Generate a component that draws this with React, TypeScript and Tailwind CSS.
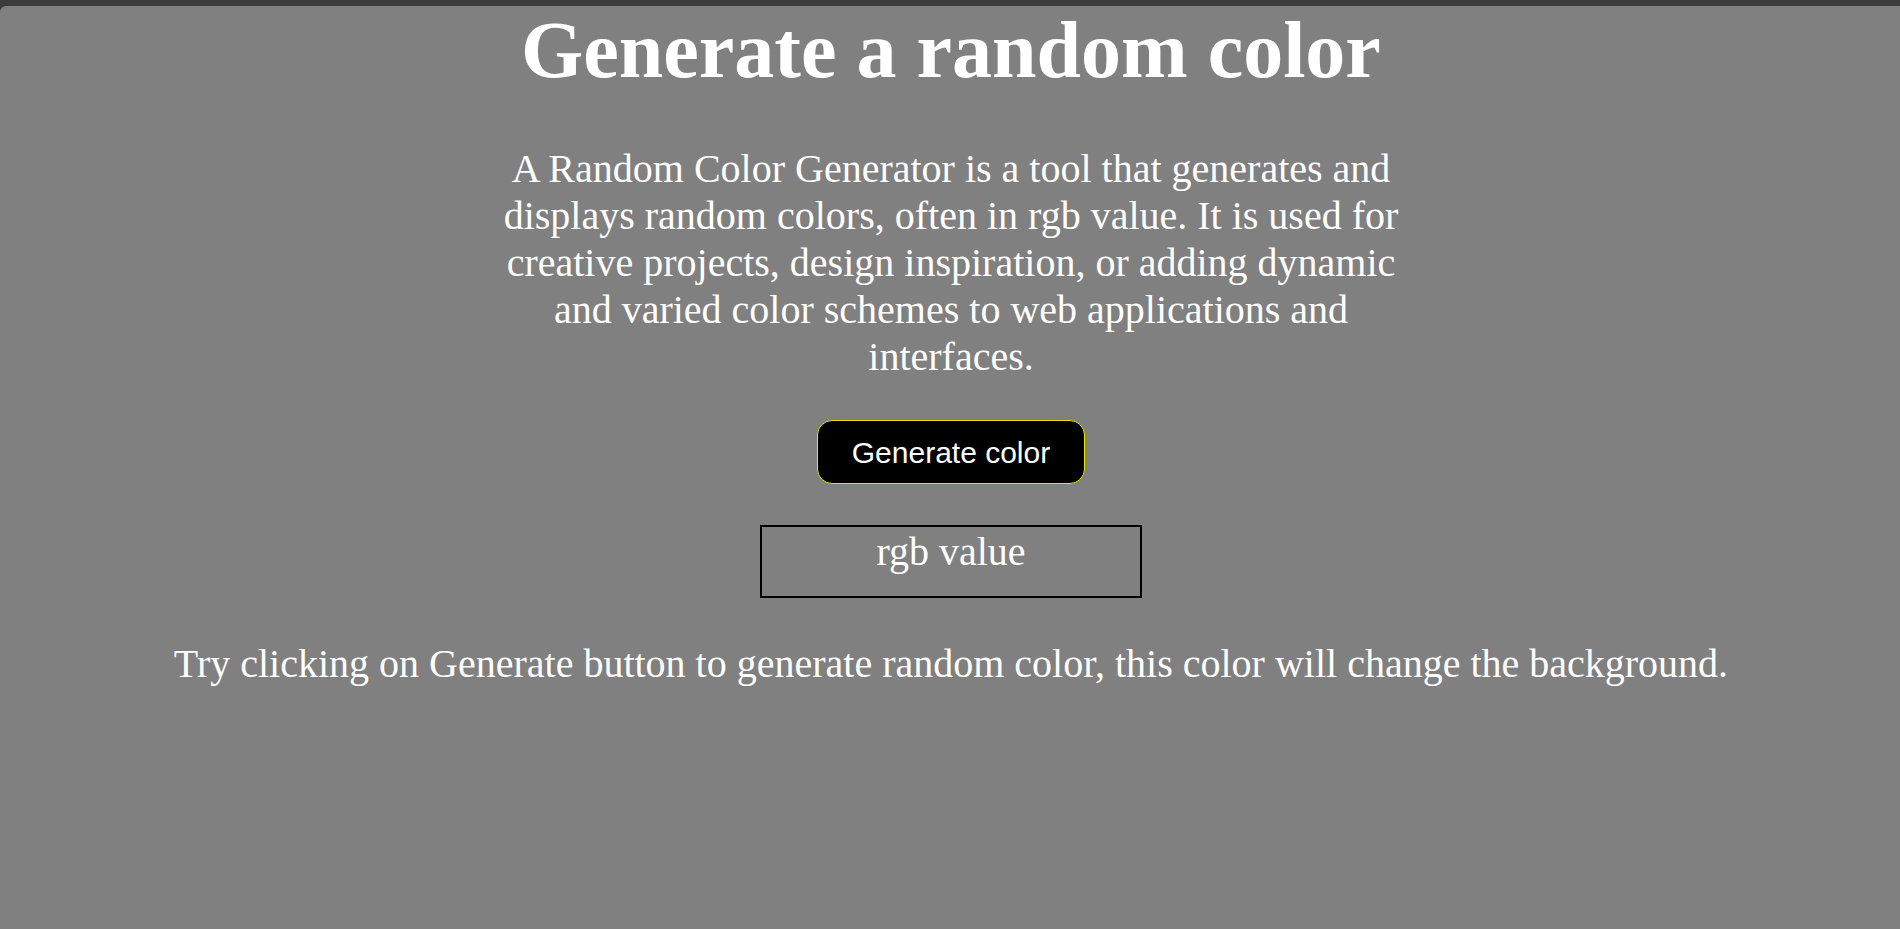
export default function App() {
  return (
    <div className="min-h-[929px] bg-[#3b3b3b] pt-[6px]">
      <div
        className="min-h-[923px] bg-[#808080] rounded-tl-[6px] flex flex-col items-center text-white pl-[2px]"
        style={{ fontFamily: '"Liberation Serif", "Times New Roman", serif' }}
      >
        <h1 className="text-[80px] leading-[88px] font-bold">Generate a random color</h1>

        <p className="mt-[51px] w-[900px] text-center text-[40px] leading-[47px]">
          A Random Color Generator is a tool that generates and displays random colors, often in rgb value. It is
          used for creative projects, design inspiration, or adding dynamic and varied color schemes to web
          applications and interfaces.
        </p>

        <button
          className="mt-[40px] w-[268px] h-[64px] bg-black border border-[#e6e600] rounded-[15px] text-[30px] text-white"
          style={{ fontFamily: '"Liberation Sans", Arial, sans-serif' }}
        >
          Generate color
        </button>

        <div className="mt-[41px] w-[382px] h-[73px] border-2 border-black text-center text-[40px] leading-[46px] pt-[2px]">
          rgb value
        </div>

        <p className="mt-[43px] text-[40px] leading-[46px] text-center">
          Try clicking on Generate button to generate random color, this color will change the background.
        </p>
      </div>
    </div>
  );
}
